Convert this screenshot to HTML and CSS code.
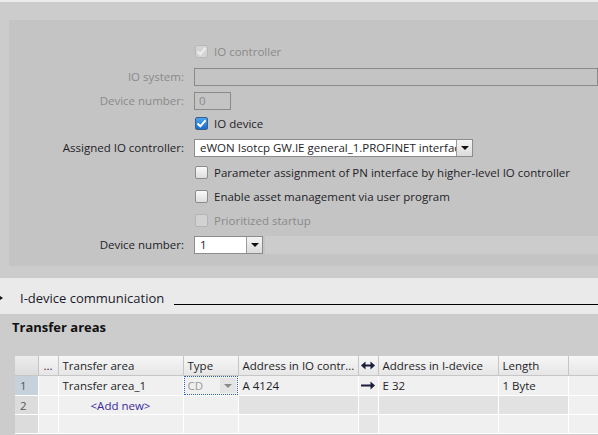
FILE: index.html
```html
<!DOCTYPE html>
<html>
<head>
<meta charset="utf-8">
<link rel="stylesheet" href="styles.css">
</head>
<body>
<div class="strip"></div>
<div class="outer">
  <div class="panel">
    <div class="row h25">
      <span class="label"></span>
      <span class="check dis"><span class="box checked-dis"></span>IO controller</span>
    </div>
    <div class="row h25">
      <span class="label dis">IO system:</span>
      <span class="input wide"></span>
    </div>
    <div class="row h23">
      <span class="label dis">Device number:</span>
      <span class="input small dis">0</span>
    </div>
    <div class="row h23">
      <span class="label"></span>
      <span class="check"><span class="box checked"><svg viewBox="0 0 13 13" width="13" height="13"><path d="M2.5 6.5 L5.3 9.3 L10.5 3.3" fill="none" stroke="#fff" stroke-width="2"/></svg></span>IO device</span>
    </div>
    <div class="row h25">
      <span class="label">Assigned IO controller:</span>
      <span class="select ctrl"><span class="val">eWON Isotcp GW.IE general_1.PROFINET interface</span><span class="btn"><span class="tri"></span></span></span>
    </div>
    <div class="row h24">
      <span class="label"></span>
      <span class="check"><span class="box"></span>Parameter assignment of PN interface by higher-level IO controller</span>
    </div>
    <div class="row h24">
      <span class="label"></span>
      <span class="check"><span class="box"></span>Enable asset management via user program</span>
    </div>
    <div class="row h24">
      <span class="label"></span>
      <span class="check dis"><span class="box box-dis"></span>Prioritized startup</span>
    </div>
    <div class="row h25">
      <span class="label">Device number:</span>
      <span class="select devnum"><span class="val">1</span><span class="btn"><span class="tri"></span></span></span>
      <span class="band"></span>
    </div>
  </div>
</div>
<div class="gap"></div>
<div class="section">
  <span class="bullet"></span>
  <span class="sec-title">I-device communication</span>
  <span class="rule"></span>
</div>
<div class="sub">Transfer areas</div>
<div class="tablewrap">
  <table class="grid">
    <colgroup>
      <col class="c-num"><col class="c-dots"><col class="c-area"><col class="c-type"><col class="c-addr"><col class="c-arrow"><col class="c-addr2"><col class="c-len"><col class="c-rest">
    </colgroup>
    <thead>
      <tr>
        <th></th><th class="ctr">...</th><th>Transfer area</th><th>Type</th><th>Address in IO contr...</th>
        <th class="ctr"><svg width="14" height="9" viewBox="0 0 14 9"><path d="M3 4.5 H11" stroke="#1b1b3a" stroke-width="2"/><path d="M0 4.5 L4.5 0.5 V8.5 Z M14 4.5 L9.5 0.5 V8.5 Z" fill="#1b1b3a"/></svg></th>
        <th>Address in I-device</th><th>Length</th><th></th>
      </tr>
    </thead>
    <tbody>
      <tr>
        <td class="num sel">1</td><td></td><td>Transfer area_1</td>
        <td class="type"><span class="type-in"><span class="cd">CD</span><span class="tbtn"><span class="gtri"></span></span></span></td>
        <td>A 4124</td>
        <td class="ctr"><svg width="14" height="9" viewBox="0 0 14 9"><path d="M0 4.5 H10" stroke="#1b1b3a" stroke-width="2"/><path d="M14 4.5 L9.5 0.5 V8.5 Z" fill="#1b1b3a"/></svg></td>
        <td>E 32</td><td>1 Byte</td><td></td>
      </tr>
      <tr>
        <td class="num">2</td><td></td><td class="add">&lt;Add new&gt;</td><td></td>
        <td class="g"></td><td class="g2"></td><td class="g"></td><td class="g"></td><td></td>
      </tr>
      <tr>
        <td class="num"></td><td></td><td></td><td></td><td></td><td class="g2"></td><td></td><td></td><td></td>
      </tr>
    </tbody>
  </table>
</div>
</body>
</html>
```

FILE: styles.css
```css
html, body {
  margin: 0;
  padding: 0;
}
body {
  width: 598px;
  height: 435px;
  overflow: hidden;
  background: #cccccc;
  font-family: "Open Sans", "Noto Sans", sans-serif;
  font-size: 11.5px;
  color: #1e1e28;
}
.strip {
  height: 2px;
  background: #ebebeb;
}
.outer {
  padding: 18px 0 0 9px;
}
.panel {
  background: #c4c4c4;
  padding: 19px 0 9px 0;
}
.row {
  display: flex;
  align-items: center;
}
.h23 { height: 23px; }
.h24 { height: 24px; }
.h25 { height: 25px; }
.label {
  width: 175px;
  flex: none;
  text-align: right;
  margin-right: 10px;
  white-space: nowrap;
}
.dis { color: #8a8a8a; }
.check {
  display: flex;
  align-items: center;
  white-space: nowrap;
}
.box {
  width: 11px;
  height: 11px;
  border: 1px solid #8c8c8c;
  border-radius: 2px;
  background: linear-gradient(#fafafa, #dedede);
  margin: 0 6px 0 1px;
  flex: none;
  position: relative;
  overflow: hidden;
}
.box svg {
  position: absolute;
  left: -1px;
  top: -1px;
}
.box.checked {
  background: linear-gradient(#4aa3f0, #1c6cc8);
  border-color: #3a5f8a;
}
.box-dis {
  background: #d2d2d2;
  border-color: #b4b4b4;
}
.checked-dis {
  background: #d4d4d4;
  border-color: #b8b8b8;
}
.checked-dis::after {
  content: "";
  position: absolute;
  left: 3px;
  top: 0px;
  width: 3px;
  height: 7px;
  border: solid #eeeeee;
  border-width: 0 2px 2px 0;
  transform: rotate(40deg);
}
.input {
  height: 16px;
  border: 1px solid #8a8a8a;
  box-sizing: content-box;
  display: flex;
  align-items: center;
  padding-left: 4px;
}
.input.wide {
  flex: 1;
}
.input.small {
  width: 31px;
}
.select {
  height: 16px;
  border: 1px solid #8c8c8c;
  background: #fff;
  display: flex;
  align-items: center;
  overflow: hidden;
}
.select .val {
  flex: 1;
  padding-left: 5px;
  white-space: nowrap;
  overflow: hidden;
}
.select .btn {
  width: 15px;
  height: 16px;
  border-left: 1px solid #9a9a9a;
  background: linear-gradient(#f4f4f4, #dcdcdc);
  display: flex;
  align-items: center;
  justify-content: center;
  flex: none;
}
.tri {
  width: 0;
  height: 0;
  border-left: 4px solid transparent;
  border-right: 4px solid transparent;
  border-top: 4px solid #111;
}
.select.ctrl { width: 277px; }
.select.devnum { width: 67px; }
.band {
  flex: 1;
  height: 18px;
  background: #cccccc;
  margin-left: 2px;
}
.gap {
  height: 12px;
}
.section {
  height: 36px;
  background: #eaeaea;
  display: flex;
  align-items: center;
  position: relative;
}
.bullet {
  width: 0;
  height: 0;
  border-top: 2px solid transparent;
  border-bottom: 2px solid transparent;
  border-left: 3px solid #111;
  margin: 3px 17px 0 0;
}
.sec-title {
  font-size: 13px;
  color: #1a1a2a;
  white-space: nowrap;
  margin-top: 3px;
}
.rule {
  flex: 1;
  height: 1px;
  background: #000;
  align-self: flex-end;
  margin: 0 0 9px 10px;
}
.sub {
  height: 42px;
  box-sizing: border-box;
  padding: 4px 0 0 12px;
  font-weight: bold;
  font-size: 13px;
  color: #111;
}
.tablewrap {
  padding-left: 15px;
}
.grid {
  border-collapse: collapse;
  table-layout: fixed;
  width: 600px;
}
.c-num { width: 23px; }
.c-dots { width: 20px; }
.c-area { width: 125px; }
.c-type { width: 55px; }
.c-addr { width: 120px; }
.c-arrow { width: 20px; }
.c-addr2 { width: 120px; }
.c-len { width: 70px; }
.c-rest { width: 47px; }
.grid th {
  height: 19px;
  padding: 0 0 0 4px;
  font-weight: normal;
  text-align: left;
  background: linear-gradient(#f6f6f6, #e6e6e6);
  border-left: 1px solid #c6c6c6;
  border-bottom: 1px solid #c6c6c6;
  white-space: nowrap;
  overflow: hidden;
}
.grid th:first-child {
  border-left: none;
  background: linear-gradient(#ececec, #dcdcdc);
}
.grid td {
  height: 18px;
  padding: 0 0 0 4px;
  background: #f0f0f0;
  border: 1px solid #ffffff;
  white-space: nowrap;
  overflow: hidden;
}
.grid .ctr {
  text-align: center;
  padding: 0;
}
.grid td.num {
  background: #dcdcdc;
  color: #555;
  padding-left: 5px;
  border-left: none;
}
.grid td.num.sel {
  background: #c6d1dc;
}
.grid td.g { background: #e2e2e2; }
.grid td.g2 { background: #e6e6e6; }
.grid td.add {
  color: #3a2aa0;
  text-align: center;
  padding: 0 0 0 0;
}
.grid td.type {
  padding: 0;
  position: relative;
}
.type-in {
  display: flex;
  align-items: center;
  height: 17px;
  border: 1px dotted #2b5fc8;
}
.cd {
  flex: 1;
  color: #9a9a9a;
  padding-left: 3px;
}
.tbtn {
  width: 16px;
  height: 15px;
  background: #e4e4e4;
  display: flex;
  align-items: center;
  justify-content: center;
  margin-right: 1px;
}
.gtri {
  width: 0;
  height: 0;
  border-left: 4px solid transparent;
  border-right: 4px solid transparent;
  border-top: 4px solid #8a8a8a;
}
```
